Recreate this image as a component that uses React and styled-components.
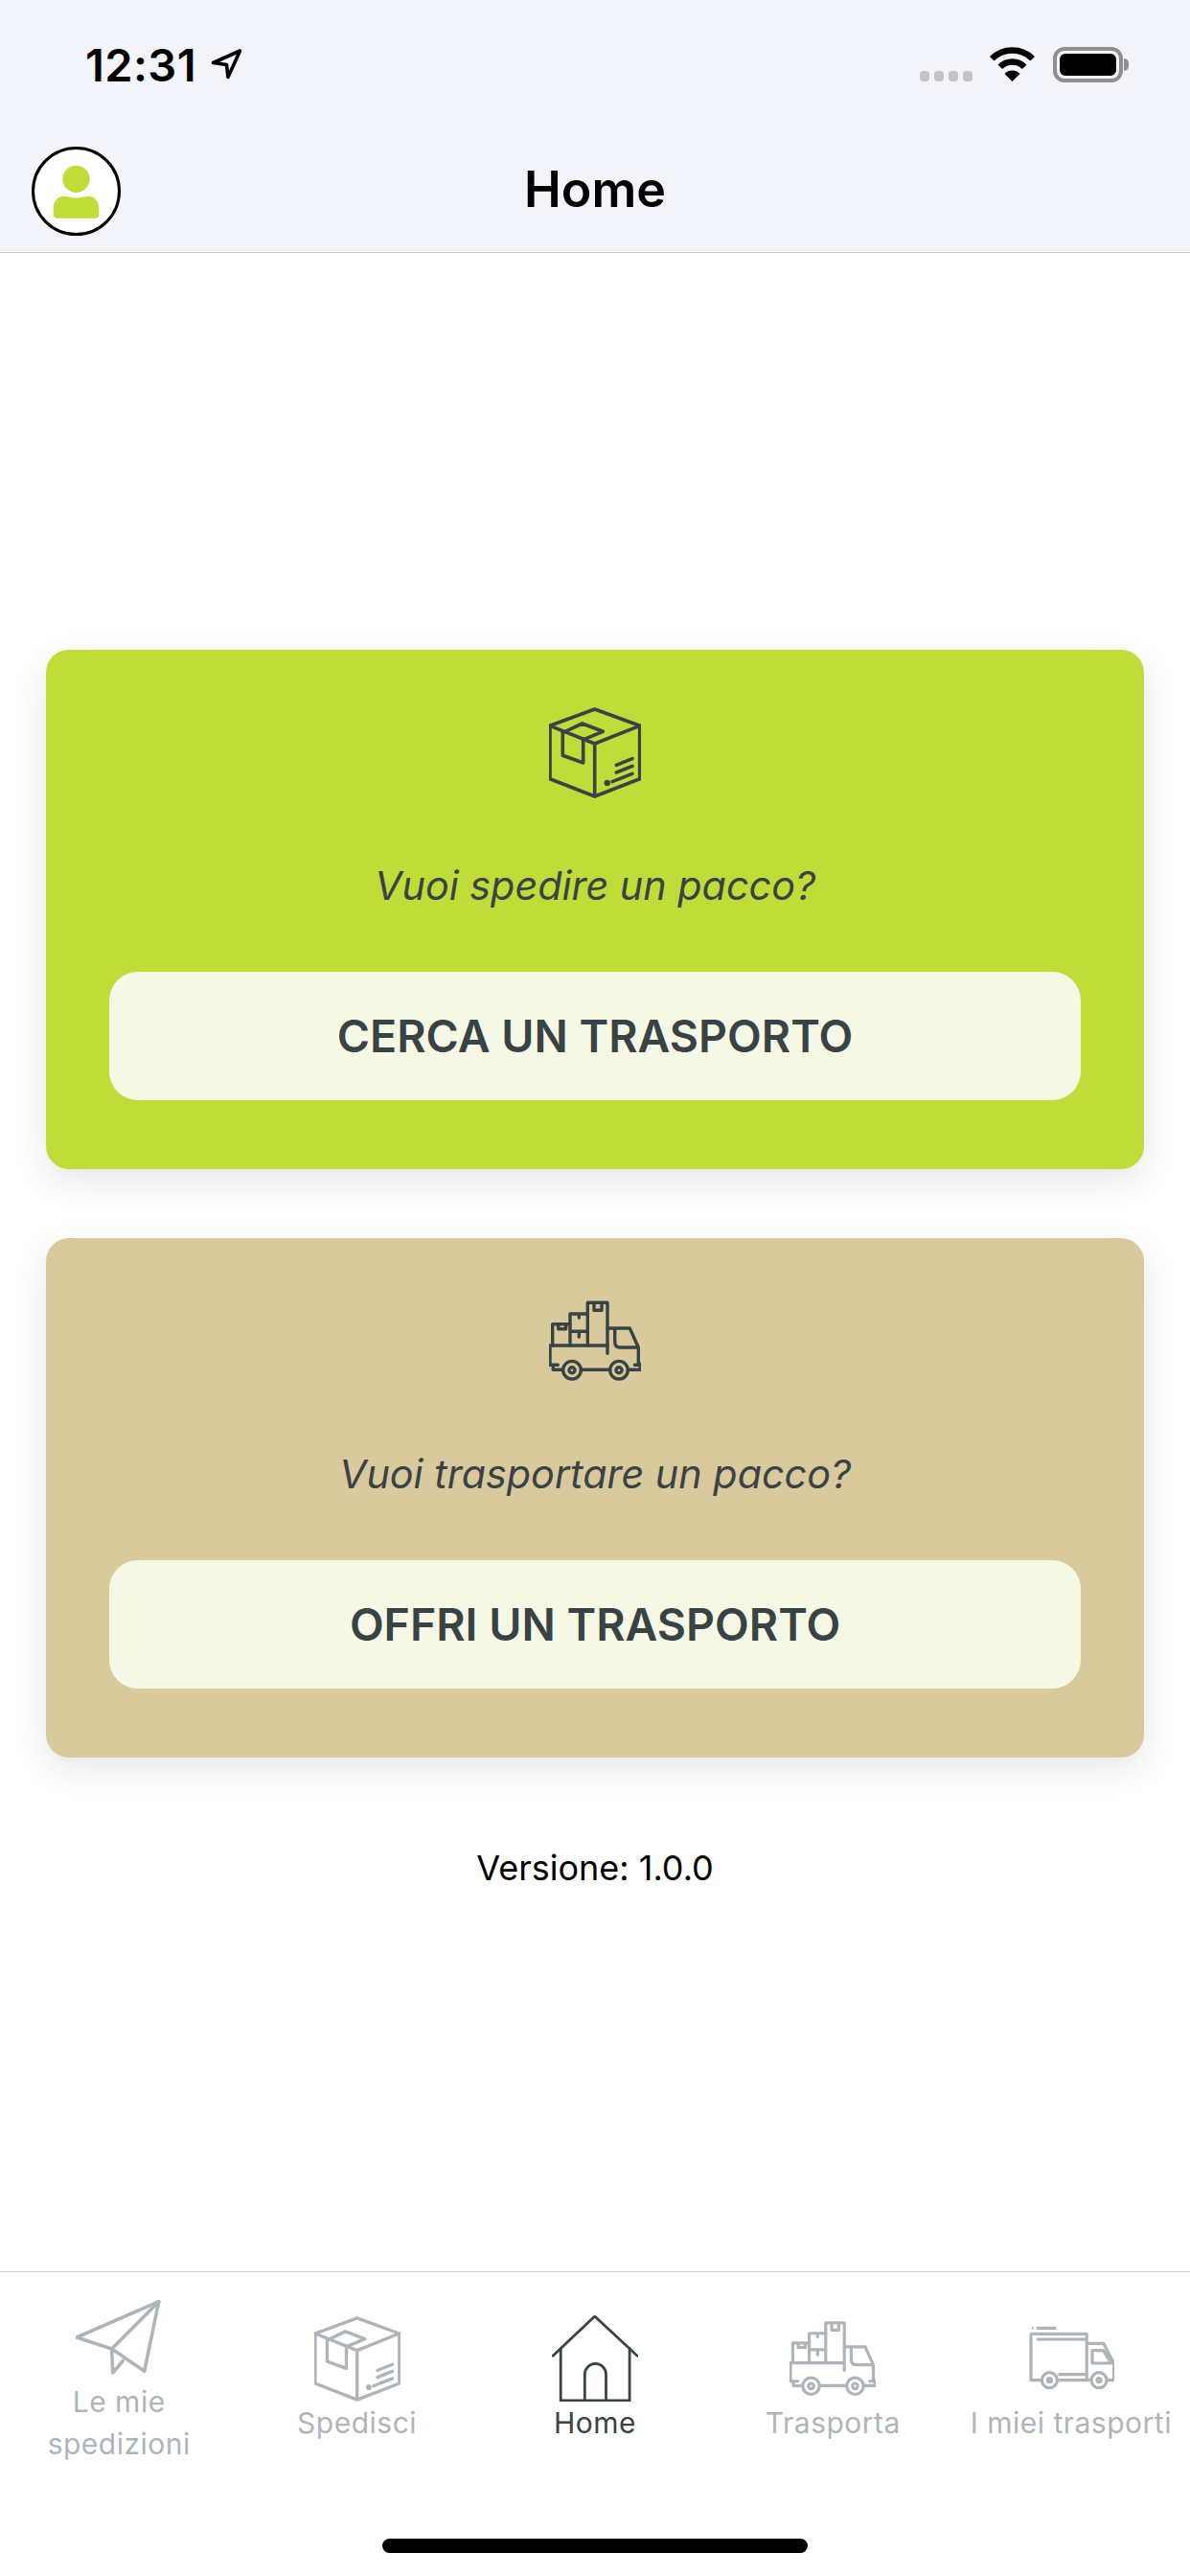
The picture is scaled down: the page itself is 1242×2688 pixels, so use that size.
import React from "react";
import styled, { createGlobalStyle } from "styled-components";

const GlobalStyle = createGlobalStyle`
  html, body {
    margin: 0;
    padding: 0;
    background: #fff;
    font-family: Inter, "Liberation Sans", sans-serif;
  }
`;

const Screen = styled.div`
  width: 1242px;
  height: 2688px;
  display: flex;
  flex-direction: column;
  overflow: hidden;
  background: #fff;
`;

const Header = styled.header`
  height: 264px;
  box-sizing: border-box;
  flex: none;
  background: #f3f4f9;
  border-bottom: 1px solid #c8c8cc;
`;

const StatusBar = styled.div`
  height: 153px;
  box-sizing: border-box;
  padding: 45px 70px 0 89px;
  display: flex;
  justify-content: space-between;
  align-items: flex-start;
`;

const TimeGroup = styled.div`
  display: flex;
  align-items: center;
  gap: 15px;
  height: 44px;
`;

const Time = styled.span`
  font-size: 47px;
  font-weight: 600;
  letter-spacing: 0.4px;
  color: #000;
`;

const StatusIcons = styled.div`
  display: flex;
  align-items: flex-start;
  padding-top: 4px;
`;

const SignalDots = styled.div`
  display: flex;
  gap: 5px;
  margin: 25px 18px 0 0;
`;

const Dot = styled.span`
  width: 10px;
  height: 11px;
  border-radius: 4px;
  background: #c4c4c6;
`;

const Battery = styled.div`
  width: 73px;
  height: 37px;
  margin-left: 19px;
  padding: 3px;
  box-sizing: border-box;
  border: 4px solid #8e8e93;
  border-radius: 12px;
  position: relative;
  &::after {
    content: "";
    position: absolute;
    right: -10px;
    top: 8px;
    width: 5px;
    height: 13px;
    border-radius: 0 6px 6px 0;
    background: #8e8e93;
  }
`;

const BatteryFill = styled.div`
  height: 100%;
  background: #000;
  border-radius: 6px;
`;

const NavRow = styled.div`
  display: grid;
  grid-template-columns: 1fr auto 1fr;
  align-items: center;
  padding: 0 33px;
  height: 92px;
`;

const Avatar = styled.div`
  width: 93px;
  height: 93px;
  box-sizing: border-box;
  border: 3px solid #000;
  border-radius: 50%;
  background: #fff;
  svg {
    display: block;
  }
`;

const Title = styled.h1`
  margin: 0;
  font-size: 52px;
  font-weight: 600;
  color: #000;
  transform: translateY(-2px);
`;

const Main = styled.main`
  flex: 1;
  display: flex;
  flex-direction: column;
  padding: 414px 48px 0;
  gap: 72px;
`;

const Card = styled.section`
  height: 542px;
  box-sizing: border-box;
  padding: 59px 66px 0;
  border-radius: 24px;
  background: ${(props) => props.$color};
  box-shadow: 0 12px 36px rgba(0, 0, 0, 0.1);
  display: flex;
  flex-direction: column;
  align-items: center;
`;

const CardIcon = styled.div`
  width: 96px;
  height: 96px;
  color: #394345;
  svg {
    display: block;
  }
`;

const Question = styled.p`
  margin: 0;
  height: 181px;
  display: flex;
  align-items: center;
  font-size: 41.300px;
  font-style: italic;
  font-weight: 400;
  color: #394345;
`;

const ActionButton = styled.button`
  width: 100%;
  height: 134px;
  flex: none;
  border: 0;
  border-radius: 30px;
  background: #f5f8e4;
  font-family: inherit;
  font-size: 46.500px;
  font-weight: 600;
  color: #394345;
`;

const Version = styled.div`
  margin-top: 21px;
  text-align: center;
  font-size: 36px;
  line-height: 44px;
  color: #000;
`;

const TabBar = styled.nav`
  flex: none;
  height: 224px;
  box-sizing: border-box;
  border-top: 1px solid #d0d0d3;
  display: grid;
  grid-template-columns: repeat(5, 1fr);
`;

const Tab = styled.div`
  display: flex;
  flex-direction: column;
  align-items: center;
  justify-content: center;
  color: ${(props) => (props.$active ? "#394345" : "#aeb5b9")};
  svg {
    display: block;
    flex: none;
  }
`;

const TabLabel = styled.span`
  font-size: 30px;
  line-height: 44px;
  letter-spacing: 0.5px;
  text-align: center;
  white-space: pre-line;
`;

const HomeArea = styled.div`
  flex: none;
  height: 94px;
  display: flex;
  justify-content: center;
  padding-top: 55px;
  box-sizing: border-box;
`;

const HomeIndicator = styled.div`
  width: 444px;
  height: 15px;
  border-radius: 8px;
  background: #000;
`;

const BoxIcon = ({ size = 96 }) => (
  <svg width={size} height={size} viewBox="0 0 96 96" fill="none" stroke="currentColor" strokeWidth="3.6" strokeLinejoin="round" strokeLinecap="round">
    <path d="M47.700 3 94.700 20.300V75.700L47.700 94 1 75.700V20.300Z" />
    <path d="M1 20.300 47.700 39 94.700 20.300M47.700 39V94" />
    <path d="M14.300 26V51.300L35.700 59V33.700" />
    <path d="M17 26.300 34.700 18 56.300 26.300 38.700 33.700" />
    <path d="M70.300 61.300 87 54.700M70.300 69 87 62.300M66 78.700 87 70.300" />
    <circle cx="60.700" cy="80" r="1.400" fill="currentColor" />
  </svg>
);

const TruckIcon = ({ size = 96 }) => (
  <svg width={size} height={size} viewBox="0 0 96 96" fill="none" stroke="currentColor" strokeWidth="3.400" strokeLinejoin="round" strokeLinecap="round">
    <path d="M61 53H1V73.300H9.300M4.300 73.300V78.300H14.300M33.700 78.300H63.700M82.700 78.300H95.300V72.300M89.300 73.300H95.300" />
    <circle cx="24" cy="78.700" r="9.300" />
    <circle cx="24" cy="78.700" r="3" />
    <circle cx="73" cy="78.700" r="9.300" />
    <circle cx="73" cy="78.700" r="3" />
    <path d="M61 35H84.300L93.300 55V72M68.700 35V49Q68.700 55 74 55H93.300" />
    <path d="M61 61.300V8.300H40.300V53M47 8.300V16.300H55V8.300" />
    <path d="M40.300 20H22V53M22 38.300H40.300M31.300 20V24M31.300 38.300V44" />
    <path d="M22 30.700H3.700V53M9.700 30.700V35.700H17.700V30.700" />
  </svg>
);

const PlaneIcon = () => (
  <svg width="90" height="90" viewBox="0 0 90 90" fill="none" stroke="currentColor" strokeWidth="3.600" strokeLinejoin="round" strokeLinecap="round">
    <path d="M86.700 7.700 1 45 37.700 57 71.700 80.300Z" />
    <path d="M86.700 7.700 37.700 57 38.700 82 49.300 69.300" />
  </svg>
);

const HomeIcon = () => (
  <svg width="90" height="90" viewBox="0 0 90 90" fill="none" stroke="currentColor" strokeWidth="2.800" strokeLinecap="round">
    <path d="M1.100 42.300 44.700 1 89.200 42.300" />
    <path d="M9.200 34.600V89H81.100V34.600" />
    <path d="M34.300 89V61.500A11 11 0 0 1 56.500 61.500V89" />
  </svg>
);

const VanIcon = () => (
  <svg width="90" height="90" viewBox="0 0 90 90" fill="none" stroke="currentColor" strokeWidth="3.200" strokeLinejoin="round">
    <path d="M4 13.300H5.500M9.100 13.300H29M9.100 25H59.800" />
    <path d="M14.800 67.700H3V19.300H61.200V67.700" />
    <path d="M31.400 61.700H61M31.400 67.700H65" />
    <circle cx="22.400" cy="67.700" r="8" />
    <circle cx="22.400" cy="67.700" r="2" />
    <circle cx="74" cy="67.700" r="8" />
    <circle cx="74" cy="67.700" r="2" />
    <path d="M61.200 29.300H78.700L89.500 50V67.700H83M67 36.700H78.700L86.500 50H67Z" />
  </svg>
);

const PersonIcon = () => (
  <svg width="87" height="87" viewBox="0 0 86 86" fill="#bfdc39">
    <circle cx="43" cy="30.500" r="14" />
    <path d="M27 49C31 47 36 50 43 50S55 47 59 49C64 50 66.500 56 66.500 61V67Q66.500 71 62.500 71H23.500Q19.500 71 19.500 67V61C19.500 56 22 50 27 49Z" />
  </svg>
);

const LocationArrow = () => (
  <svg width="33" height="32" viewBox="0 0 33 32" fill="none" stroke="#000" strokeWidth="3.600" strokeLinejoin="round">
    <path d="M30.500 2 2.500 14.500 16.500 16.500 18 29.500Z" />
  </svg>
);

const WifiIcon = () => (
  <svg width="47" height="36" viewBox="0 0 47 36" fill="none" stroke="#000">
    <path d="M2.300 12.300A30 30 0 0 1 44.700 12.300" strokeWidth="6.500" />
    <path d="M10.800 20.800A18 18 0 0 1 36.200 20.800" strokeWidth="6.500" />
    <path d="M23.500 36 15.500 28A11 11 0 0 1 31.500 28Z" fill="#000" stroke="none" />
  </svg>
);

const tabs = [
  { label: "Le mie\nspedizioni", Icon: PlaneIcon },
  { label: "Spedisci", Icon: () => <BoxIcon size={90} /> },
  { label: "Home", Icon: HomeIcon, active: true },
  { label: "Trasporta", Icon: () => <TruckIcon size={90} /> },
  { label: "I miei trasporti", Icon: VanIcon },
];

export default function App() {
  return (
    <>
      <GlobalStyle />
      <Screen>
        <Header>
          <StatusBar>
            <TimeGroup>
              <Time>12:31</Time>
              <LocationArrow />
            </TimeGroup>
            <StatusIcons>
              <SignalDots>
                <Dot />
                <Dot />
                <Dot />
                <Dot />
              </SignalDots>
              <WifiIcon />
              <Battery>
                <BatteryFill />
              </Battery>
            </StatusIcons>
          </StatusBar>
          <NavRow>
            <Avatar>
              <PersonIcon />
            </Avatar>
            <Title>Home</Title>
          </NavRow>
        </Header>
        <Main>
          <Card $color="#bfdc39">
            <CardIcon>
              <BoxIcon />
            </CardIcon>
            <Question>Vuoi spedire un pacco?</Question>
            <ActionButton>CERCA UN TRASPORTO</ActionButton>
          </Card>
          <Card $color="#d9ca9d">
            <CardIcon>
              <TruckIcon />
            </CardIcon>
            <Question>Vuoi trasportare un pacco?</Question>
            <ActionButton>OFFRI UN TRASPORTO</ActionButton>
          </Card>
          <Version>Versione: 1.0.0</Version>
        </Main>
        <TabBar>
          {tabs.map(({ label, Icon, active }) => (
            <Tab key={label} $active={active}>
              <Icon />
              <TabLabel>{label}</TabLabel>
            </Tab>
          ))}
        </TabBar>
        <HomeArea>
          <HomeIndicator />
        </HomeArea>
      </Screen>
    </>
  );
}
